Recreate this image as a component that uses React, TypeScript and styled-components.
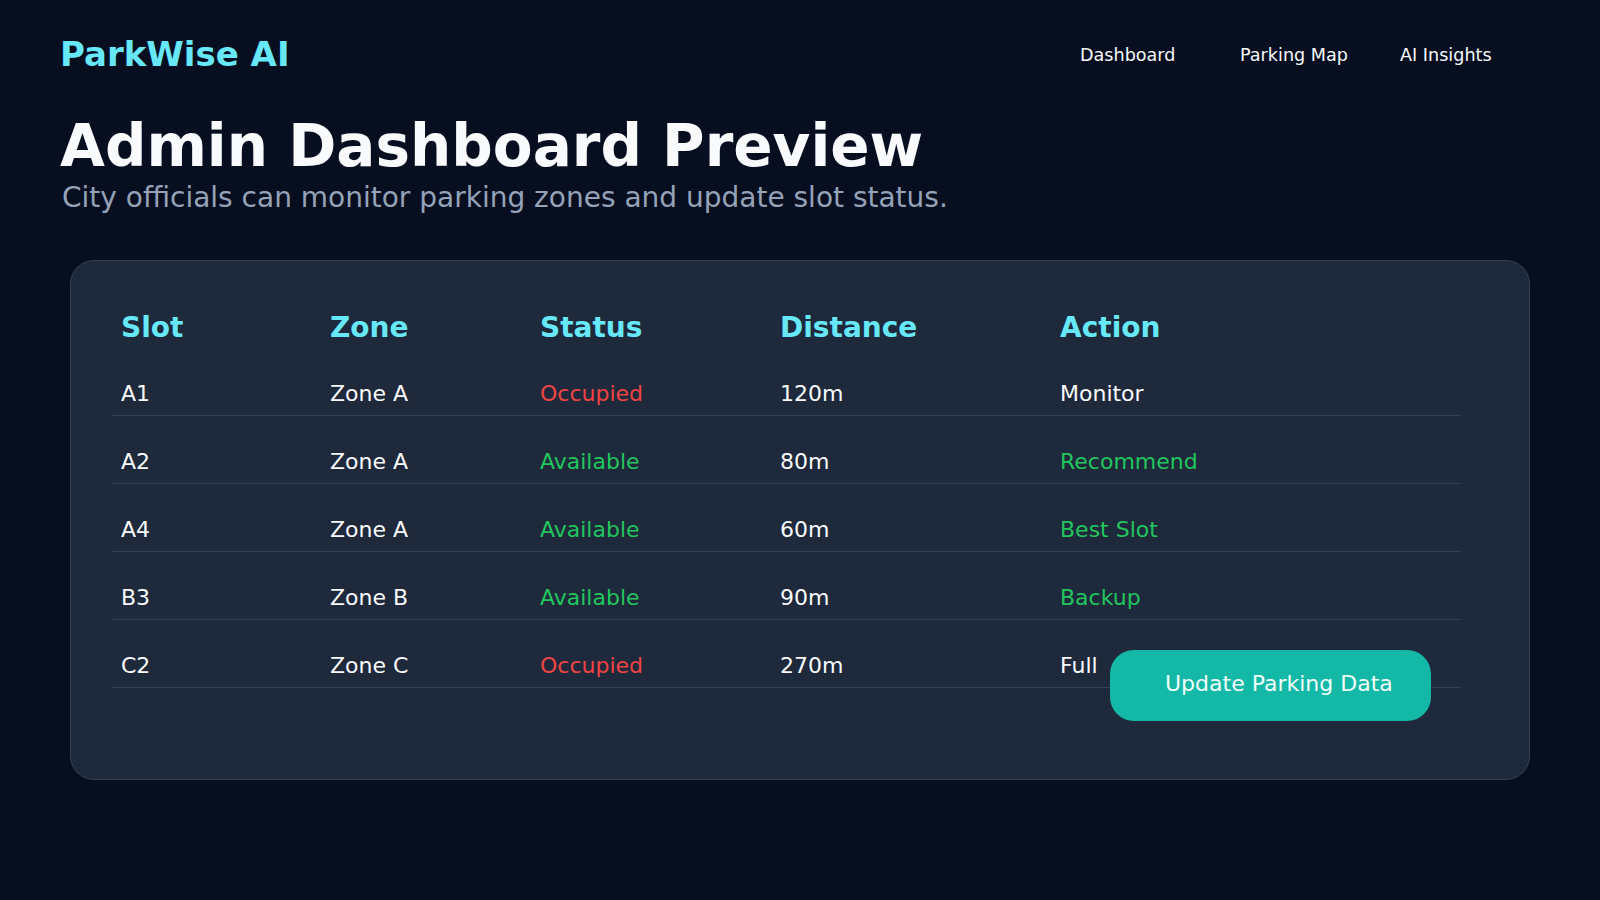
import React from "react";
import styled, { createGlobalStyle } from "styled-components";

const GlobalStyle = createGlobalStyle`
    html, body {
        margin: 0;
        padding: 0;
        background: #070e20;
        min-height: 100vh;
        font-family: "DejaVu Sans", "Noto Sans", sans-serif;
        color: #f8fafc;
    }
`;

const Page = styled.div`
    min-height: 900px;
    background: #070e20;
`;

const Header = styled.header`
    display: flex;
    justify-content: space-between;
    align-items: center;
    padding: 34px 40px 0 60px;
`;

const Logo = styled.div`
    font-size: 34px;
    line-height: 1.2;
    font-weight: 700;
    color: #67e8f9;
`;

const Nav = styled.nav`
    display: grid;
    grid-template-columns: repeat(3, 160px);
    padding-top: 3px;
`;

const NavLink = styled.a`
    font-size: 17.6px;
    line-height: 1.2;
    color: #f8fafc;
    text-decoration: none;
    cursor: pointer;
`;

const Hero = styled.section`
    padding: 0 60px;
    margin-top: 37px;
`;

const Title = styled.h1`
    margin: 0;
    font-size: 58px;
    line-height: 1.2;
    font-weight: 700;
    color: #f8fafc;
`;

const Subtitle = styled.p`
    margin: 0 0 0 2px;
    font-size: 28px;
    line-height: 1.2;
    color: #94a3b8;
`;

const Card = styled.div`
    position: relative;
    margin: 45px 70px 0;
    padding: 50px 40px 91px;
    background: #1e293b;
    border: 1px solid #334155;
    border-radius: 24px;
`;

const Table = styled.div`
    width: 98%;
`;

const Row = styled.div<{ $head?: boolean }>`
    display: grid;
    grid-template-columns: 209px 210px 240px 280px 1fr;
    font-size: ${p => (p.$head ? "28px" : "22px")};
    line-height: ${p => (p.$head ? "34px" : "26px")};
    font-weight: ${p => (p.$head ? 700 : 400)};
    color: ${p => (p.$head ? "#67e8f9" : "#f8fafc")};
    padding: ${p => (p.$head ? "0 0 3px" : "33px 0 8px")};
    border-bottom: ${p => (p.$head ? "none" : "1px solid #334155")};
`;

type Tone = "default" | "bad" | "good";

const toneColor: Record<Tone, string> = {
    default: "#f8fafc",
    bad: "#ef4444",
    good: "#22c55e",
};

const Cell = styled.div<{ $tone?: Tone }>`
    padding: 0 10px;
    white-space: nowrap;
    color: ${p => (p.$tone ? toneColor[p.$tone] : "inherit")};
`;

const UpdateButton = styled.button`
    position: absolute;
    right: 98px;
    bottom: 58px;
    width: 321px;
    height: 71px;
    display: flex;
    align-items: center;
    padding: 0 0 3px 55px;
    border: none;
    border-radius: 24px;
    background: #14b8a6;
    color: #f0fdfa;
    font-family: inherit;
    font-size: 22px;
    line-height: 26px;
    cursor: pointer;
`;

const slots = [
    { slot: "A1", zone: "Zone A", status: "Occupied", distance: "120m", action: "Monitor" },
    { slot: "A2", zone: "Zone A", status: "Available", distance: "80m", action: "Recommend" },
    { slot: "A4", zone: "Zone A", status: "Available", distance: "60m", action: "Best Slot" },
    { slot: "B3", zone: "Zone B", status: "Available", distance: "90m", action: "Backup" },
    { slot: "C2", zone: "Zone C", status: "Occupied", distance: "270m", action: "Full" },
];

const App: React.FC = () => {
    return (
        <Page>
            <GlobalStyle />
            <Header>
                <Logo>ParkWise AI</Logo>
                <Nav>
                    <NavLink>Dashboard</NavLink>
                    <NavLink>Parking Map</NavLink>
                    <NavLink>AI Insights</NavLink>
                </Nav>
            </Header>
            <Hero>
                <Title>Admin Dashboard Preview</Title>
                <Subtitle>City officials can monitor parking zones and update slot status.</Subtitle>
            </Hero>
            <Card>
                <Table>
                    <Row $head>
                        <Cell>Slot</Cell>
                        <Cell>Zone</Cell>
                        <Cell>Status</Cell>
                        <Cell>Distance</Cell>
                        <Cell>Action</Cell>
                    </Row>
                    {slots.map(s => {
                        const free = s.status === "Available";
                        return (
                            <Row key={s.slot}>
                                <Cell>{s.slot}</Cell>
                                <Cell>{s.zone}</Cell>
                                <Cell $tone={free ? "good" : "bad"}>{s.status}</Cell>
                                <Cell>{s.distance}</Cell>
                                <Cell $tone={free ? "good" : "default"}>{s.action}</Cell>
                            </Row>
                        );
                    })}
                </Table>
                <UpdateButton>Update Parking Data</UpdateButton>
            </Card>
        </Page>
    );
};

export default App;
